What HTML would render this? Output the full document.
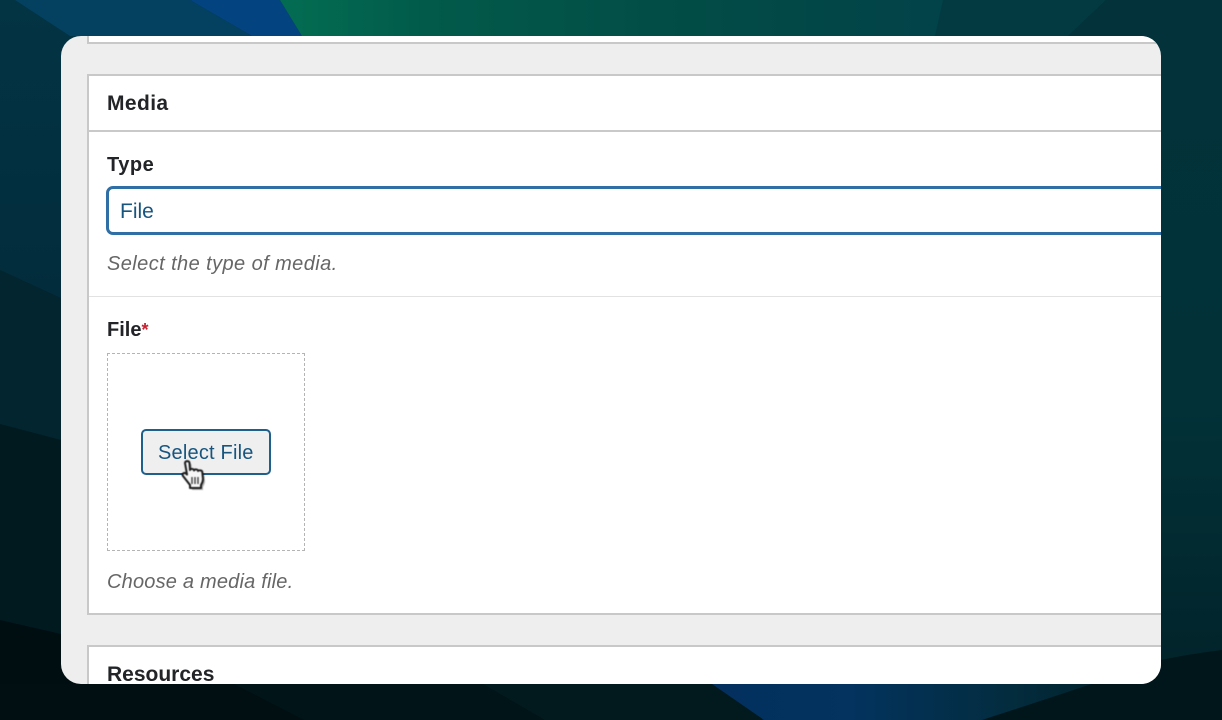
<!DOCTYPE html>
<html lang="en"><head><meta charset="utf-8"><title>Media</title>
<style>
html,body{margin:0;padding:0}
body{width:1222px;height:720px;overflow:hidden;position:relative;background:#02262e;font-family:"Liberation Sans",sans-serif}
svg.bg{position:absolute;left:0;top:0}
.win{position:absolute;left:61px;top:36px;width:1100px;height:648px;border-radius:20px;overflow:hidden;background:#eeeeee}
.abs{position:absolute;white-space:nowrap;line-height:1}
.panel{position:absolute;left:26px;width:1100px;background:#fff;border:2px solid #c8c8c8;border-right:0;box-sizing:border-box}
.t{color:#232427;font-weight:bold}
.d{color:#666;font-style:italic;font-size:20px}
</style></head><body>
<svg class="bg" width="1222" height="720" viewBox="0 0 1222 720">
<defs>
<linearGradient id="g" x1="300" x2="945" y1="0" y2="0" gradientUnits="userSpaceOnUse"><stop offset="0" stop-color="#036b51"/><stop offset=".2" stop-color="#025a4a"/><stop offset=".6" stop-color="#024c46"/><stop offset="1" stop-color="#024249"/></linearGradient>
<linearGradient id="l" x1="0" x2="0" y1="0" y2="300" gradientUnits="userSpaceOnUse"><stop offset="0" stop-color="#033444"/><stop offset="1" stop-color="#022c3c"/></linearGradient>
<linearGradient id="r" x1="0" x2="0" y1="36" y2="660" gradientUnits="userSpaceOnUse"><stop offset="0" stop-color="#03323a"/><stop offset=".6" stop-color="#023138"/><stop offset="1" stop-color="#02242b"/></linearGradient>
<linearGradient id="b" x1="712" x2="1110" y1="0" y2="0" gradientUnits="userSpaceOnUse"><stop offset="0" stop-color="#03305f"/><stop offset=".35" stop-color="#03335e"/><stop offset=".75" stop-color="#032c3e"/><stop offset="1" stop-color="#02222b"/></linearGradient>
</defs>
<rect width="1222" height="720" fill="#02262e"/>
<rect x="0" width="611" height="720" fill="url(#l)"/>
<rect x="611" width="611" height="720" fill="url(#r)"/>
<polygon points="0,270 61,298 100,298 100,720 0,720" fill="#02252f"/>
<polygon points="0,424 61,440 100,440 100,720 0,720" fill="#011a20"/>
<polygon points="0,620 61,634 100,634 100,720 0,720" fill="#000e12"/>
<polygon points="15,0 70,36 252,36 190,0" fill="#04405f"/>
<polygon points="190,0 252,36 302,36 280,0" fill="#03437f"/>
<polygon points="280,0 945,0 938,36 302,36" fill="url(#g)"/>
<polygon points="943,0 1106,0 1068,36 935,36" fill="#033a42"/>
<polygon points="1106,0 1222,0 1222,36 1068,36" fill="#03323a"/>
<rect x="0" y="684" width="1222" height="36" fill="#011418"/>
<polygon points="0,684 234,684 304,720 0,720" fill="#010f13"/>
<polygon points="483,684 712,684 764,720 545,720" fill="#021a1e"/>
<polygon points="712,684 1222,684 1222,720 764,720" fill="url(#b)"/>
<path d="M982,720 Q1100,682 1161,660 Q1190,654 1222,650 L1222,720Z" fill="#01161a"/>
</svg>
<div class="win">
<div style="position:absolute;left:26px;top:0;width:1100px;height:8px;background:#fff;border-left:2px solid #c8c8c8;border-bottom:2px solid #c8c8c8;box-sizing:border-box"></div>
<div class="panel" style="top:38px;height:541px"></div>
<div style="position:absolute;left:28px;top:94px;width:1072px;height:2px;background:#c9c9c9"></div>
<div style="position:absolute;left:28px;top:260px;width:1072px;height:1px;background:#e2e2e2"></div>
<div class="abs t" style="left:46px;top:57px;font-size:21px;letter-spacing:.4px">Media</div>
<div class="abs t" style="left:46px;top:119px;font-size:20px;letter-spacing:.5px">Type</div>
<div style="position:absolute;left:45px;top:150px;width:1100px;height:49px;box-sizing:border-box;border:3px solid #2f6fa5;border-radius:7px;background:#fff"></div>
<div class="abs" style="left:59px;top:165px;font-size:21px;color:#17557f">File</div>
<div class="abs d" style="left:46px;top:218px;letter-spacing:.42px">Select the type of media.</div>
<div class="abs t" style="left:46px;top:284px;font-size:20px">File<span style="color:#c8202f;font-size:18px">*</span></div>
<div style="position:absolute;left:46px;top:317px;width:198px;height:198px;box-sizing:border-box;border:1.500px dashed #b4b4b4"></div>
<div style="position:absolute;left:80px;top:393px;width:130px;height:46px;box-sizing:border-box;border:2px solid #1f5f8b;border-radius:5px;background:#efefef"></div>
<div class="abs" style="left:97px;top:407px;font-size:20px;color:#17557f;letter-spacing:.2px">Select File</div>
<div class="abs d" style="left:46px;top:536px;letter-spacing:.2px">Choose a media file.</div>
<div class="panel" style="top:609px;height:80px"></div>
<div class="abs t" style="left:46px;top:628px;font-size:21px">Resources</div>
<svg style="position:absolute;left:118px;top:421px;filter:blur(.4px)" width="32" height="34" viewBox="0 0 32 34">
<path d="M8 8c0-2.500 4.500-2.500 4.500 0L13 15c0-1.500 4-1.500 4 .5c.5-1.500 4-1.500 4 .5c.5-1 4-1 4.300 1L26 24c0 3-1.500 5-2 6v3H13v-3L6 21c-1.500-2 1-4 3-2.500l1 1z" fill="#000" opacity=".3"/>
<path d="M6 6c0-2.500 4.500-2.500 4.500 0L11 13c0-1.500 4-1.500 4 .5c.5-1.500 4-1.500 4 .5c.5-1 4-1 4.300 1L24 22c0 3-1.500 5-2 6v3H11v-3L4 19c-1.500-2 1-4 3-2.500l1 1z" fill="#f6f6f6" stroke="#1c1c1c" stroke-width="2" stroke-linejoin="round"/>
<path d="M13 20v7M16 20v7M19 20v7" stroke="#333" stroke-width="1.300"/>
</svg>
</div>
</body></html>
